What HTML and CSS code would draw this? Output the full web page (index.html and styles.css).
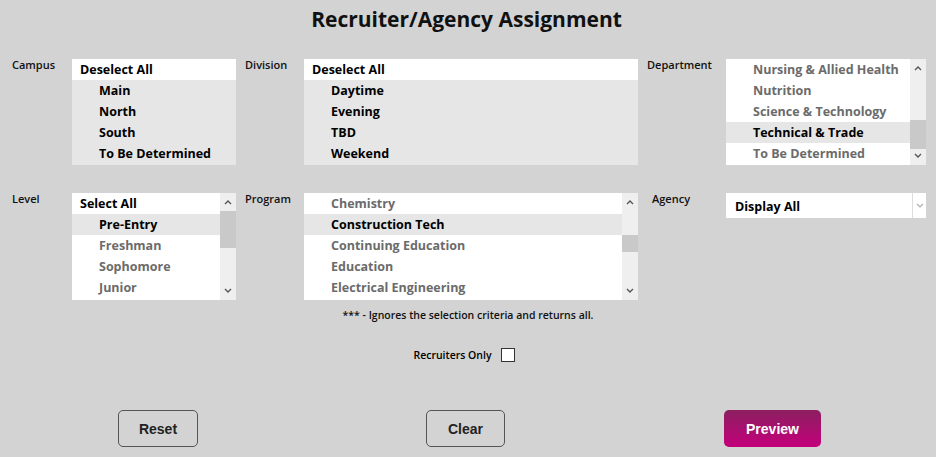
FILE: index.html
```html
<!DOCTYPE html>
<html>
<head>
<meta charset="utf-8">
<link rel="stylesheet" href="styles.css">
</head>
<body>
<div class="page">
  <h1 class="title">Recruiter/Agency Assignment</h1>

  <div class="filters">
    <div class="lbl">Campus</div>
    <div class="list">
      <div class="row head">Deselect All</div>
      <div class="row item sel">Main</div>
      <div class="row item sel">North</div>
      <div class="row item sel">South</div>
      <div class="row item sel">To Be Determined</div>
    </div>

    <div class="lbl lbl-gap">Division</div>
    <div class="list">
      <div class="row head">Deselect All</div>
      <div class="row item sel">Daytime</div>
      <div class="row item sel">Evening</div>
      <div class="row item sel">TBD</div>
      <div class="row item sel">Weekend</div>
    </div>

    <div class="lbl lbl-gap">Department</div>
    <div class="list scroll">
      <div class="rows">
        <div class="row item">Nursing &amp; Allied Health</div>
        <div class="row item">Nutrition</div>
        <div class="row item">Science &amp; Technology</div>
        <div class="row item sel">Technical &amp; Trade</div>
        <div class="row item">To Be Determined</div>
      </div>
      <div class="sbar">
        <svg class="arr" width="8" height="6" viewBox="0 0 8 6"><path d="M1 5 L4 2 L7 5" fill="none" stroke="#555" stroke-width="1.4"/></svg>
        <div class="track"><div class="thumb" style="top:43px;height:29px"></div></div>
        <svg class="arr" width="8" height="6" viewBox="0 0 8 6"><path d="M1 1 L4 4 L7 1" fill="none" stroke="#555" stroke-width="1.4"/></svg>
      </div>
    </div>

    <div class="lbl">Level</div>
    <div class="list scroll">
      <div class="rows">
        <div class="row head">Select All</div>
        <div class="row item sel">Pre-Entry</div>
        <div class="row item">Freshman</div>
        <div class="row item">Sophomore</div>
        <div class="row item">Junior</div>
      </div>
      <div class="sbar">
        <svg class="arr" width="8" height="6" viewBox="0 0 8 6"><path d="M1 5 L4 2 L7 5" fill="none" stroke="#555" stroke-width="1.4"/></svg>
        <div class="track"><div class="thumb" style="top:0;height:37px"></div></div>
        <svg class="arr" width="8" height="6" viewBox="0 0 8 6"><path d="M1 1 L4 4 L7 1" fill="none" stroke="#555" stroke-width="1.4"/></svg>
      </div>
    </div>

    <div class="lbl lbl-gap">Program</div>
    <div class="list scroll">
      <div class="rows">
        <div class="row item">Chemistry</div>
        <div class="row item sel">Construction Tech</div>
        <div class="row item">Continuing Education</div>
        <div class="row item">Education</div>
        <div class="row item">Electrical Engineering</div>
      </div>
      <div class="sbar">
        <svg class="arr" width="8" height="6" viewBox="0 0 8 6"><path d="M1 5 L4 2 L7 5" fill="none" stroke="#555" stroke-width="1.4"/></svg>
        <div class="track"><div class="thumb" style="top:24px;height:17px"></div></div>
        <svg class="arr" width="8" height="6" viewBox="0 0 8 6"><path d="M1 1 L4 4 L7 1" fill="none" stroke="#555" stroke-width="1.4"/></svg>
      </div>
    </div>

    <div class="lbl lbl-gap lbl-agency">Agency</div>
    <div class="agency-cell">
      <div class="select">
        <span class="select-val">Display All</span>
        <span class="select-btn"><svg width="8" height="5" viewBox="0 0 8 5"><path d="M1 1 L4 4 L7 1" fill="none" stroke="#aaa" stroke-width="1.1"/></svg></span>
      </div>
    </div>
  </div>

  <p class="note">*** - Ignores the selection criteria and returns all.</p>

  <div class="recruiters">
    <span>Recruiters Only</span>
    <span class="check"></span>
  </div>

  <div class="actions">
    <button class="btn btn-reset">Reset</button>
    <button class="btn btn-clear">Clear</button>
    <button class="btn btn-preview">Preview</button>
  </div>
</div>
</body>
</html>
```

FILE: styles.css
```css
* { box-sizing: border-box; }
html, body { margin: 0; padding: 0; }
body {
  background: #d3d3d3;
  font-family: "Open Sans", "DejaVu Sans", sans-serif;
  color: #000;
  width: 936px;
  height: 457px;
  overflow: hidden;
}
.page { padding-top: 5px; }
.title {
  margin: 0;
  text-align: center;
  font-size: 21px;
  font-weight: 700;
  line-height: 28px;
  color: #111;
  padding-right: 3px;
}
.filters {
  margin-top: 26px;
  padding-left: 12px;
  display: grid;
  grid-template-columns: 60px 164px 68px 334px 88px 200px;
  grid-template-rows: 106px 107px;
  row-gap: 28px;
}
.lbl {
  font-size: 11px;
  font-weight: 600;
  line-height: 14px;
  margin-top: -1px;
  color: #111;
}
.lbl-gap { padding-left: 9px; }
.lbl-agency { padding-left: 14px; }
.list {
  background: #fff;
  overflow: hidden;
  display: flex;
}
.list > .row, .rows > .row { flex: none; }
.list:not(.scroll) { flex-direction: column; background: #e6e6e6; }
.rows { flex: 1; display: flex; flex-direction: column; }
.row {
  height: 21px;
  line-height: 21px;
  font-size: 12.5px;
  font-weight: 700;
  white-space: nowrap;
  color: #6b6b6b;
}
.row.head { padding-left: 8px; color: #000; background: #fff; }
.row.item { padding-left: 27px; }
.row.sel { background: #e6e6e6; color: #000; }
.sbar {
  width: 16px;
  flex: none;
  background: #efefef;
  display: flex;
  flex-direction: column;
  align-items: center;
}
.arr { flex: none; margin: 6px 0; }
.track { flex: 1; width: 100%; position: relative; }
.thumb { position: absolute; left: 0; right: 0; background: #c9c9c9; }
.agency-cell { align-self: start; }
.select {
  height: 25px;
  background: #fff;
  display: flex;
  align-items: stretch;
}
.select-val {
  flex: 1;
  padding-left: 9px;
  font-size: 12.5px;
  font-weight: 700;
  line-height: 27px;
}
.select-btn {
  width: 14px;
  border-left: 1px solid #ddd;
  display: flex;
  align-items: center;
  justify-content: center;
}
.note {
  margin: 8px 0 0;
  text-align: center;
  font-size: 10.5px;
  font-weight: 600;
  line-height: 14px;
  color: #111;
}
.recruiters {
  margin-top: 26px;
  display: flex;
  justify-content: center;
  align-items: center;
  gap: 9px;
  font-size: 10.5px;
  font-weight: 600;
  padding-right: 8px;
}
.check {
  width: 14px;
  height: 14px;
  background: #fff;
  border: 1px solid #333;
}
.actions {
  margin-top: 48px;
  display: flex;
  padding-left: 118px;
}
.btn {
  height: 37px;
  border-radius: 5px;
  font-family: "Liberation Sans", Arial, sans-serif;
  font-weight: 700;
  font-size: 14px;
  cursor: pointer;
}
.btn-reset, .btn-clear {
  background: transparent;
  border: 1px solid #555;
  color: #222;
}
.btn-reset { width: 80px; }
.btn-clear { width: 79px; margin-left: 228px; }
.btn-preview {
  width: 97px;
  margin-left: 219px;
  border: none;
  color: #fff;
  background: linear-gradient(#8c1f60, #c3007b);
}
```
